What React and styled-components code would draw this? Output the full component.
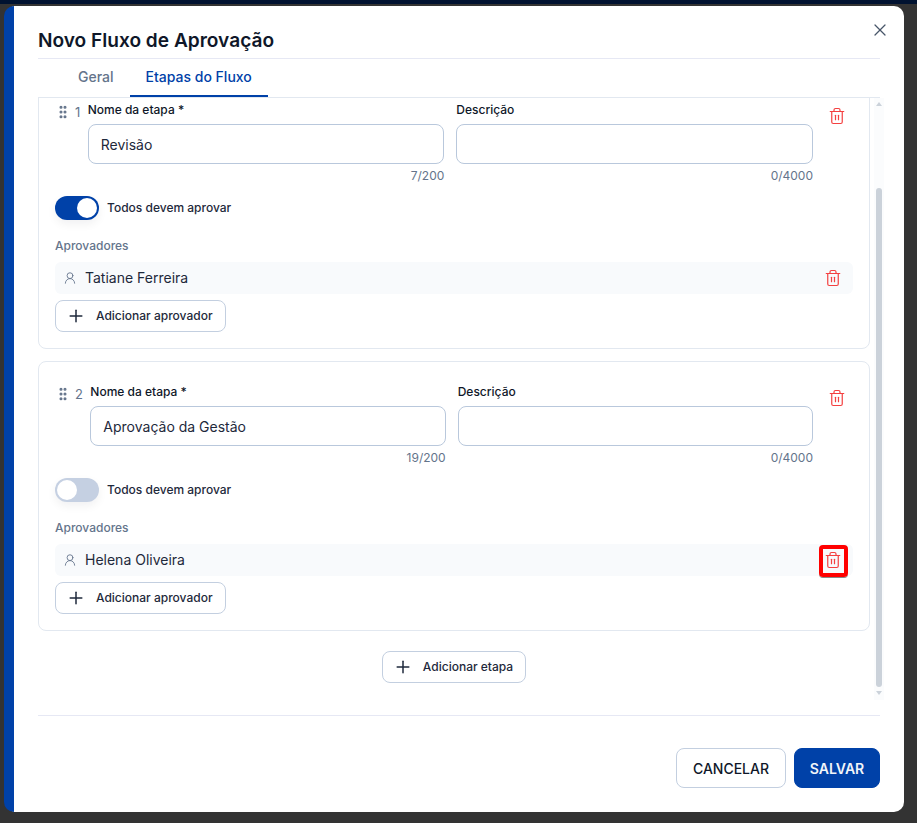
import React, { useLayoutEffect, useRef } from "react";
import styled, { createGlobalStyle } from "styled-components";
import { Trash2, UserRound, GripVertical, Plus, X } from "lucide-react";

const Global = createGlobalStyle`
  html, body { margin: 0; padding: 0; }
  body { font-family: Inter, "Liberation Sans", sans-serif; background: #333; overflow: hidden; }
  * { box-sizing: border-box; }
`;

const Page = styled.div`
  width: 917px; height: 823px; background: #333;
  border-top: 4px solid #001230;
  padding: 2px 0 0 4px;
`;
const Modal = styled.div`
  position: relative;
  width: 900px; height: 806px; background: #fff;
  border-left: 10px solid #0041a8; border-radius: 10px;
  padding: 0 24px;
  display: flex; flex-direction: column;
`;
const Header = styled.div`
  height: 53px; border-bottom: 1px solid #e6e8f4;
  display: flex; align-items: flex-end; padding-bottom: 4px;
`;
const Title = styled.h2`
  margin: 0; font-size: 19.1px; line-height: 28px; font-weight: 600; color: #0f1729;
`;
const Close = styled.button`
  position: absolute; top: 14px; right: 14px; width: 20px; height: 20px;
  padding: 0; border: 0; background: none; color: #475569;
  display: flex; align-items: center; justify-content: center;
`;
const Tabs = styled.div`
  height: 39px; border-bottom: 1px solid #e2e8f0; padding-left: 28px;
  display: flex;
`;
const Tab = styled.div`
  height: 38px; line-height: 36px;
  padding-left: ${p => p.$active ? 16 : 12}px;
  padding-right: 16px;
  font-size: 14px; font-weight: 500;
  color: ${p => p.$active ? "#0041a8" : "#64748b"};
  border-bottom: 2px solid ${p => p.$active ? "#0041a8" : "transparent"};
`;
const ScrollArea = styled.div`
  position: relative; height: 602px;
`;
const Scroll = styled.div`
  height: 100%; overflow: hidden;
`;
const ScrollBar = styled.div`
  position: absolute; top: 0; bottom: 0; right: -4px; width: 10px;
  background: #fbfcfd; padding: 4px 2px 0;
  display: flex; flex-direction: column; align-items: center;
`;
const ArrowUp = styled.div`
  width: 0; height: 0;
  border-left: 3px solid transparent; border-right: 3px solid transparent;
  border-bottom: 4px solid #cbd2da;
`;
const ArrowDown = styled.div`
  width: 0; height: 0; margin-top: 4px;
  border-left: 3px solid transparent; border-right: 3px solid transparent;
  border-top: 4px solid #cbd2da;
`;
const Thumb = styled.div`
  width: 6px; height: 499px; margin-top: 82px; border-radius: 3px; background: #cbd2da;
`;
const Inner = styled.div`
  width: 832px; display: flex; flex-direction: column; gap: 12px; padding-bottom: 17px;
`;
const Card = styled.div`
  border: 1px solid #e2e8f0; border-radius: 8px;
  padding: 16px; display: flex; flex-direction: column;
`;
const StepTop = styled.div`
  display: flex; align-items: flex-start;
`;
const Handle = styled.div`
  display: flex; align-items: center; height: 30px; margin-top: 1px; color: #64748b;
`;
const Num = styled.span`
  font-size: 13px; color: #64748b; margin: 1px 7.4px 0 4px; line-height: 30px;
`;
const Fields = styled.div`
  flex: 1; display: flex; gap: 12px;
`;
const Field = styled.div`
  flex: 1; min-width: 0;
`;
const Label = styled.div`
  font-size: 12px; line-height: 16px; font-weight: 500; color: #0f1729; margin: 6px 0 6px;
`;
const Input = styled.div`
  height: 40px; border: 1px solid #b9c8dc; border-radius: 8px; background: #fff;
  padding: 0 12px; font-size: 14px; line-height: 40px; color: #1e293b;
`;
const Count = styled.div`
  font-size: 12px; line-height: 16px; color: #64748b; text-align: right; margin-top: 4px;
`;
const TopTrash = styled.div`
  width: 32px; height: 30px; margin: 5px 0 0 8px; color: #f44040; flex: none;
  display: flex; align-items: center; justify-content: center;
`;
const Toggle = styled.div`
  display: flex; align-items: center; gap: 8px; margin-top: 12px;
  font-size: 12px; font-weight: 500; color: #1e293b;
`;
const ToggleText = styled.span` margin-bottom: 2px; `;
const Track = styled.div`
  width: 44px; height: 24px; border-radius: 12px; padding: 2px;
  background: ${p => p.$on ? "#0041a8" : "#c5d0e2"};
  box-shadow: 0 4px 10px rgba(15, 23, 42, 0.06);
  display: flex; justify-content: ${p => p.$on ? "flex-end" : "flex-start"};
`;
const Knob = styled.div`
  width: 20px; height: 20px; border-radius: 50%; background: #fff;
`;
const SubTitle = styled.div`
  font-size: 12px; line-height: 16px; font-weight: 500; color: #64748b; margin: 18px 0 8px;
`;
const ApproverRow = styled.div`
  height: 32px; background: #f8fafc; border-radius: 6px; padding: 0 8px;
  display: flex; align-items: center; gap: 8px;
  font-size: 14px; color: #1e293b;
  svg { color: #64748b; }
`;
const Name = styled.span` flex: 1; margin-bottom: 2px; `;
const RowTrash = styled.div`
  position: relative;
  width: 24px; height: 24px;
  display: flex; align-items: center; justify-content: center;
  svg { color: #f44040; }
`;
const Mark = styled.div`
  position: absolute; left: -2px; top: -3px; width: 29px; height: 32px;
  border: 4px solid #ff0000; border-radius: 4px; box-shadow: 0 1px 0 #888;
`;
const AddButton = styled.button`
  height: 32px; border: 1px solid #c3cfe0; border-radius: 8px; background: #fff;
  font-family: inherit; font-size: 12px; font-weight: 500; color: #1e293b;
  display: inline-flex; align-items: center; gap: 10px; padding: 0 12px 0 10px;
  align-self: ${p => p.$center ? "center" : "flex-start"};
  margin-top: ${p => p.$center ? 8 : 6}px;
`;
const AddText = styled.span` margin-bottom: 2px; `;
const Footer = styled.div`
  flex: 1; border-top: 1px solid #e6e8f4; margin-top: 15px;
  display: flex; justify-content: flex-end; align-items: flex-start; gap: 8px; padding-top: 32px;
`;
const Btn = styled.button`
  height: 40px; width: ${p => p.$primary ? 86 : 110}px; padding: 0;
  border-radius: 8px; font-family: inherit; font-size: 14px;
  border: 1px solid ${p => p.$primary ? "#0041a8" : "#c3cfe0"};
  background: ${p => p.$primary ? "#0041a8" : "#fff"};
  color: ${p => p.$primary ? "#f1f5f9" : "#0f1729"};
  font-weight: ${p => p.$primary ? 600 : 500};
`;

function Step({ n, name, count, on, person, marked }) {
  return (
    <Card>
      <StepTop>
        <Handle><GripVertical size={16} strokeWidth={2.6} /></Handle>
        <Num>{n}</Num>
        <Fields>
          <Field>
            <Label>Nome da etapa *</Label>
            <Input>{name}</Input>
            <Count>{count}/200</Count>
          </Field>
          <Field>
            <Label>Descrição</Label>
            <Input />
            <Count>0/4000</Count>
          </Field>
        </Fields>
        <TopTrash><Trash2 size={18} strokeWidth={1.6} /></TopTrash>
      </StepTop>
      <Toggle>
        <Track $on={on}><Knob /></Track>
        <ToggleText>Todos devem aprovar</ToggleText>
      </Toggle>
      <SubTitle>Aprovadores</SubTitle>
      <ApproverRow>
        <UserRound size={14} strokeWidth={1.5} />
        <Name>{person}</Name>
        <RowTrash>
          {marked && <Mark />}
          <Trash2 size={18} strokeWidth={1.6} />
        </RowTrash>
      </ApproverRow>
      <AddButton><Plus size={20} strokeWidth={1.8} /><AddText>Adicionar aprovador</AddText></AddButton>
    </Card>
  );
}

export default function App() {
  const ref = useRef(null);
  useLayoutEffect(() => { if (ref.current) ref.current.scrollTop = 100000; }, []);
  return (
    <Page>
      <Global />
      <Modal>
        <Header><Title>Novo Fluxo de Aprovação</Title></Header>
        <Close aria-label="Fechar"><X size={20} strokeWidth={1.5} /></Close>
        <Tabs>
          <Tab>Geral</Tab>
          <Tab $active>Etapas do Fluxo</Tab>
        </Tabs>
        <ScrollArea>
          <Scroll ref={ref}>
            <Inner>
              <Step n={1} name="Revisão" count={7} on person="Tatiane Ferreira" />
              <Step n={2} name="Aprovação da Gestão" count={19} person="Helena Oliveira" marked />
              <AddButton $center><Plus size={20} strokeWidth={1.8} /><AddText>Adicionar etapa</AddText></AddButton>
            </Inner>
          </Scroll>
          <ScrollBar>
            <ArrowUp />
            <Thumb />
            <ArrowDown />
          </ScrollBar>
        </ScrollArea>
        <Footer>
          <Btn>CANCELAR</Btn>
          <Btn $primary>SALVAR</Btn>
        </Footer>
      </Modal>
    </Page>
  );
}
